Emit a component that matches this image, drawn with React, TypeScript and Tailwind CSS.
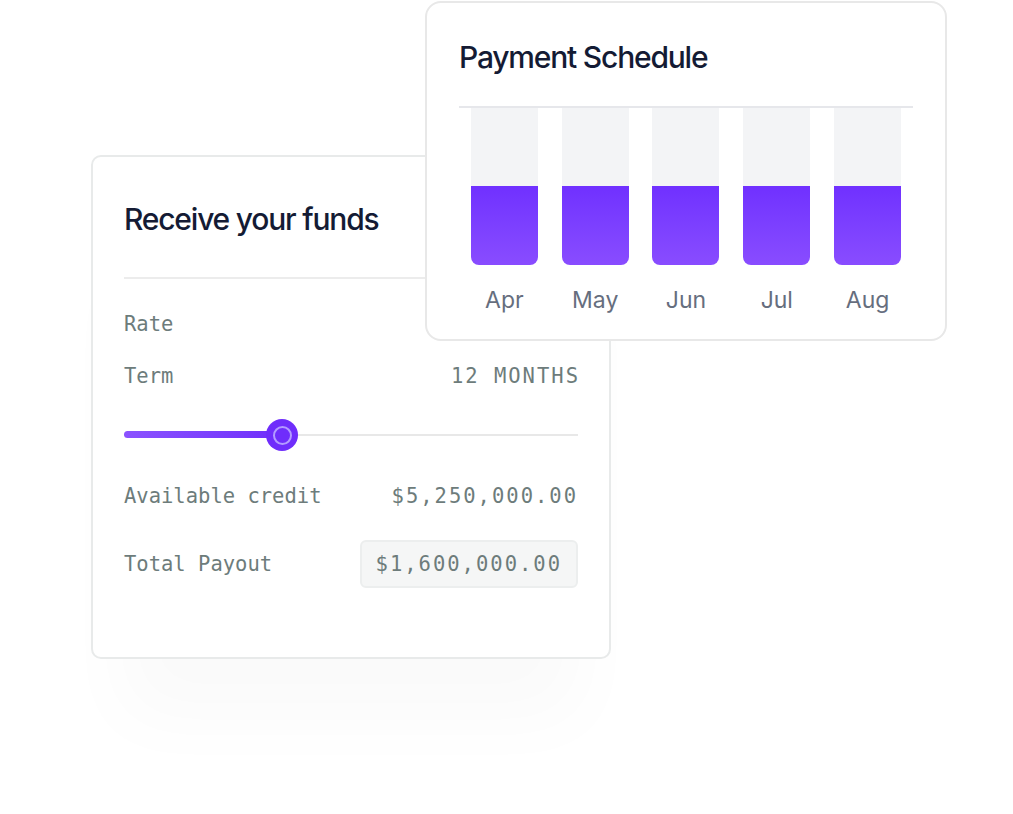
const months = ["Apr", "May", "Jun", "Jul", "Aug"];

const mono = { fontFamily: "'DejaVu Sans Mono', 'Liberation Mono', monospace" };
const sans = { fontFamily: "Inter, 'Noto Sans', sans-serif" };

function FundsCard() {
  return (
    <div className="w-[520px] rounded-[10px] border-2 border-[#e8eaea] bg-white px-[31px] pt-[45px] pb-[69px] shadow-[0_90px_70px_-30px_rgba(0,0,0,0.025)]">
      <div className="text-[30px] leading-[34px] font-medium tracking-[-0.04em] text-[#141b34]" style={sans}>
        Receive your funds
      </div>
      <div className="mt-[41px] h-[2px] bg-[#ececec]" />

      <div className="mt-[31px] flex flex-col gap-[24px] text-[20.5px] leading-[28px] text-[#6d7c7b]" style={mono}>
        <div className="flex items-center justify-between">
          <span>Rate</span>
        </div>
        <div className="flex items-center justify-between">
          <span>Term</span>
          <span className="tracking-[2px] -mr-[2px]">12 MONTHS</span>
        </div>
      </div>

      {/* slider */}
      <div className="mt-[29px] relative h-[32px] flex items-center">
        <div className="h-[2px] w-full bg-[#e8e8e8]" />
        <div className="absolute left-0 top-[12px] h-[7px] w-[158px] rounded-full bg-gradient-to-r from-[#8b52ff] to-[#6f2cfb]" />
        <div className="absolute left-[142px] top-0 flex h-[32px] w-[32px] items-center justify-center rounded-full bg-[#6f2dfb]">
          <div className="h-[19px] w-[19px] rounded-full border-2 border-[#b39bff]" />
        </div>
      </div>

      <div className="mt-[31px] flex items-center justify-between text-[20.5px] leading-[28px] text-[#6d7c7b]" style={mono}>
        <span>Available credit</span>
        <span className="tracking-[2px]">$5,250,000.00</span>
      </div>

      <div className="mt-[30px] flex items-center justify-between text-[20.5px] leading-[28px] text-[#6d7c7b]" style={mono}>
        <span>Total Payout</span>
        <span className="flex h-[48px] items-center rounded-[6px] border-2 border-[#eceeee] bg-[#f5f6f6] pl-[14px] pr-[14px] tracking-[2px]">
          $1,600,000.00
        </span>
      </div>
    </div>
  );
}

function ScheduleCard() {
  return (
    <div className="w-[522px] rounded-[16px] border-2 border-[#e8e8e8] bg-white px-[32px] pt-[37px] pb-[25px]">
      <div className="text-[30px] leading-[34px] font-medium tracking-[-0.04em] text-[#141b34]" style={sans}>
        Payment Schedule
      </div>
      <div className="mt-[32px] h-[2px] bg-[#e6e7eb]" />
      <div className="grid grid-cols-5">
        {months.map((m) => (
          <div key={m} className="flex flex-col items-center">
            <div className="flex h-[157px] w-[67px] flex-col">
              <div className="h-[78px] bg-[#f3f4f6]" />
              <div className="flex-1 rounded-b-[8px] bg-gradient-to-b from-[#7030ff] to-[#894cff]" />
            </div>
            <div className="mt-[21px] text-[23px] leading-[28px] text-[#666e7e]" style={sans}>
              {m}
            </div>
          </div>
        ))}
      </div>
    </div>
  );
}

export default function App() {
  return (
    <div className="relative h-[814px] w-[1013px] overflow-hidden bg-white">
      <div className="pl-[91px] pt-[155px]">
        <FundsCard />
      </div>
      <div className="absolute left-[425px] top-[1px]">
        <ScheduleCard />
      </div>
    </div>
  );
}
